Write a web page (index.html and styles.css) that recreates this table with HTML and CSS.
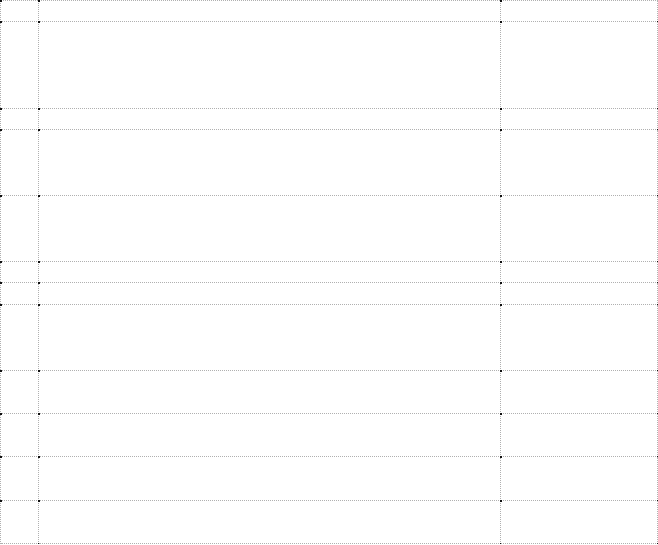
FILE: index.html
```html
<!DOCTYPE html>
<html lang="en">
<head>
    <meta charset="UTF-8">
    <meta name="viewport" content="width=device-width, initial-scale=1.0">
    <title>Table</title>
    <link rel="stylesheet" href="styles.css">
</head>
<body>
    <div class="grid">
        <div class="cell"></div><div class="cell"></div><div class="cell"></div>
        <div class="cell"></div><div class="cell"></div><div class="cell"></div>
        <div class="cell"></div><div class="cell"></div><div class="cell"></div>
        <div class="cell"></div><div class="cell"></div><div class="cell"></div>
        <div class="cell"></div><div class="cell"></div><div class="cell"></div>
        <div class="cell"></div><div class="cell"></div><div class="cell"></div>
        <div class="cell"></div><div class="cell"></div><div class="cell"></div>
        <div class="cell"></div><div class="cell"></div><div class="cell"></div>
        <div class="cell"></div><div class="cell"></div><div class="cell"></div>
        <div class="cell"></div><div class="cell"></div><div class="cell"></div>
        <div class="cell"></div><div class="cell"></div><div class="cell"></div>
        <div class="cell"></div><div class="cell"></div><div class="cell"></div>
    </div>
</body>
</html>
```

FILE: styles.css
```css
* {
    margin: 0;
    padding: 0;
    box-sizing: border-box;
}

body {
    font-family: 'Liberation Sans', Arial, sans-serif;
    background: #fff;
    color: #333;
}

.grid {
    display: grid;
    width: 658px;
    grid-template-columns: 38px 462px 157px;
    grid-template-rows: 21px 87px 21px 66px 66px 21px 22px 66px 43px 43px 44px 43px;
    border-top: 1px dotted #b0b0b0;
    border-left: 1px dotted #b0b0b0;
}

.cell {
    position: relative;
    border-right: 1px dotted #b0b0b0;
    border-bottom: 1px dotted #b0b0b0;
}

/* dark points where the lines cross */
.cell::before,
.cell::after {
    content: '';
    position: absolute;
    width: 2px;
    height: 2px;
    background: #111;
}

.cell::before {
    left: -1px;
    top: -1px;
}

.cell::after {
    right: -2px;
    bottom: -2px;
}
```
